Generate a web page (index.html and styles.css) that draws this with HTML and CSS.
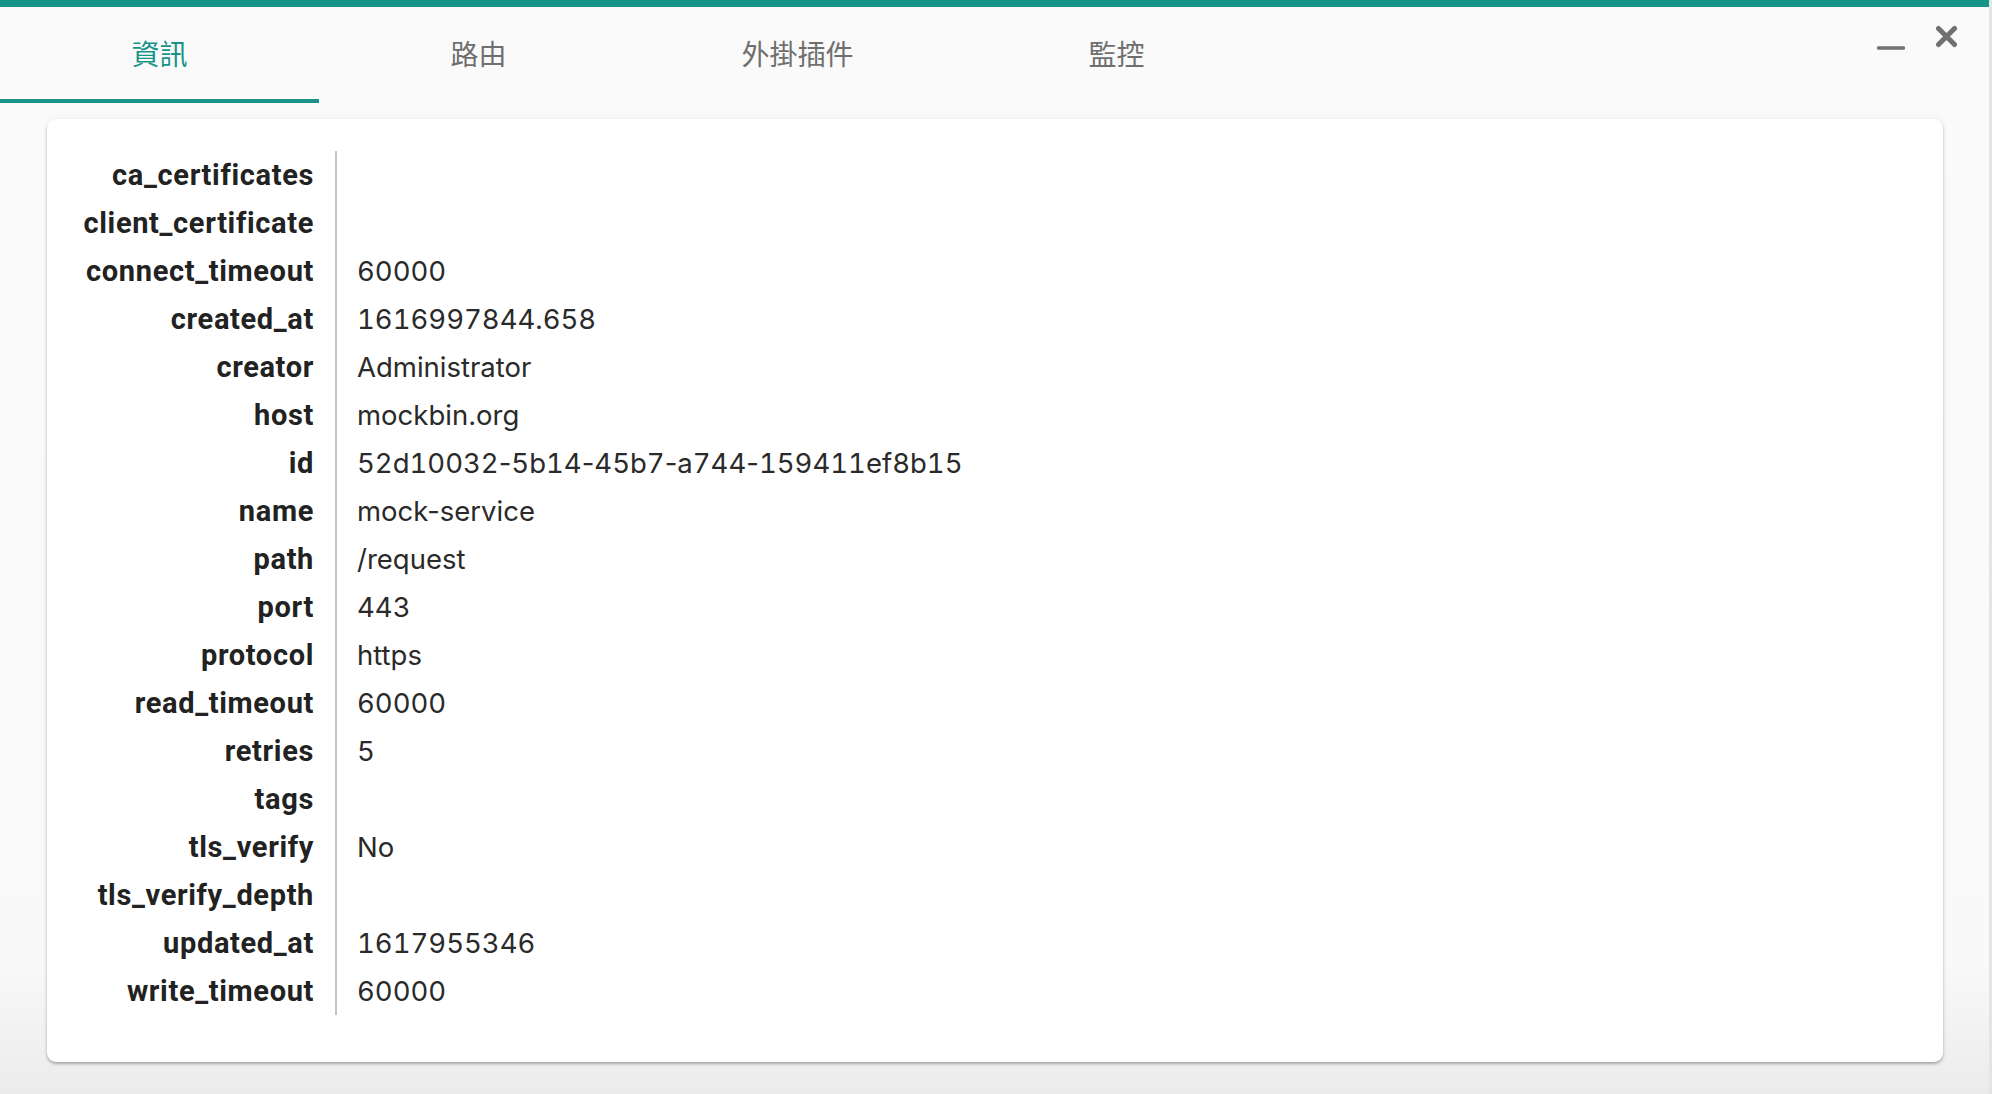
FILE: index.html
```html
<!DOCTYPE html>
<html lang="zh-Hant">
<head>
<meta charset="utf-8">
<title>Service</title>
<link rel="stylesheet" href="styles.css">
</head>
<body>
<div class="drawer">
  <div class="topbar"></div>
  <div class="header">
    <nav class="tabs">
      <div class="tab active">資訊</div>
      <div class="tab">路由</div>
      <div class="tab">外掛插件</div>
      <div class="tab">監控</div>
    </nav>
    <div class="actions">
      <span class="act minimize"><svg width="28" height="6" viewBox="0 0 28 6"><line x1="1.5" y1="3" x2="26.5" y2="3" stroke="#707070" stroke-width="3.5" stroke-linecap="round"/></svg></span>
      <span class="act close"><svg width="23" height="23" viewBox="0 0 23 23"><path d="M3.5 3.5L19.5 19.5M19.5 3.5L3.5 19.5" stroke="#707070" stroke-width="5" stroke-linecap="round"/></svg></span>
    </div>
  </div>
  <div class="card">
    <dl class="props">
      <dt>ca_certificates</dt><dd></dd>
      <dt>client_certificate</dt><dd></dd>
      <dt>connect_timeout</dt><dd class="num">60000</dd>
      <dt>created_at</dt><dd class="num">1616997844.658</dd>
      <dt>creator</dt><dd>Administrator</dd>
      <dt>host</dt><dd>mockbin.org</dd>
      <dt>id</dt><dd class="num">52d10032<span class="hy">-</span>5b14<span class="hy">-</span>45b7<span class="hy">-</span>a744<span class="hy">-</span>159411ef8b15</dd>
      <dt>name</dt><dd>mock-service</dd>
      <dt>path</dt><dd>/request</dd>
      <dt>port</dt><dd class="num">443</dd>
      <dt>protocol</dt><dd>https</dd>
      <dt>read_timeout</dt><dd class="num">60000</dd>
      <dt>retries</dt><dd class="num">5</dd>
      <dt>tags</dt><dd></dd>
      <dt>tls_verify</dt><dd>No</dd>
      <dt>tls_verify_depth</dt><dd></dd>
      <dt>updated_at</dt><dd class="num">1617955346</dd>
      <dt>write_timeout</dt><dd class="num">60000</dd>
    </dl>
  </div>
</div>
</body>
</html>
```
FILE: styles.css
```css
html, body {
  margin: 0;
  padding: 0;
  height: 100%;
}
body {
  font-family: Roboto, "Noto Sans CJK TC", sans-serif;
  background: #fafafa;
  overflow: hidden;
}
.drawer {
  height: 1094px;
  box-sizing: border-box;
  border-right: 3px solid #e4e4e4;
  background: linear-gradient(to bottom, #fafafa 0%, #f9f9f9 88%, #ebebeb 100%);
}
.topbar {
  height: 7px;
  background: #179487;
}
.header {
  display: flex;
  align-items: flex-start;
}
.tabs {
  display: flex;
}
.tab {
  width: 319px;
  height: 92px;
  box-sizing: content-box;
  display: flex;
  align-items: center;
  justify-content: center;
  padding-top: 3px;
  margin-top: -3px;
  border-bottom: 4px solid transparent;
  font-family: "Noto Sans CJK TC", sans-serif;
  font-size: 28px;
  color: #6f6f6f;
}
.tab.active {
  color: #179487;
  border-bottom-color: #179487;
}
.actions {
  margin-left: auto;
  display: flex;
  align-items: flex-start;
  gap: 30px;
  padding-right: 31px;
}
.act {
  display: block;
}
.act svg {
  display: block;
}
.minimize {
  margin-top: 38px;
}
.close {
  margin-top: 18px;
}
.card {
  margin: 16px 46px 0 47px;
  background: #fff;
  border-radius: 9px;
  box-shadow: 0 2px 3px rgba(0,0,0,0.28), 0 0 6px rgba(0,0,0,0.05);
  padding: 32px 0 47px 0;
}
.props {
  display: grid;
  grid-template-columns: 288px 1fr;
  margin: 0;
  line-height: 48px;
}
.props dt {
  text-align: right;
  padding-right: 21px;
  font-weight: 700;
  font-size: 29px;
  letter-spacing: 0.65px;
  color: #222;
  height: 48px;
}
.props dd {
  margin: 0;
  border-left: 2px solid #c4c4c4;
  padding-left: 20px;
  font-family: Inter, Roboto, sans-serif;
  font-size: 27.5px;
  color: #2a2a2a;
  height: 48px;
}
.props dd.num {
  font-variant-numeric: tabular-nums;
}
.props dd .hy {
  font-variant-numeric: normal;
}
```
